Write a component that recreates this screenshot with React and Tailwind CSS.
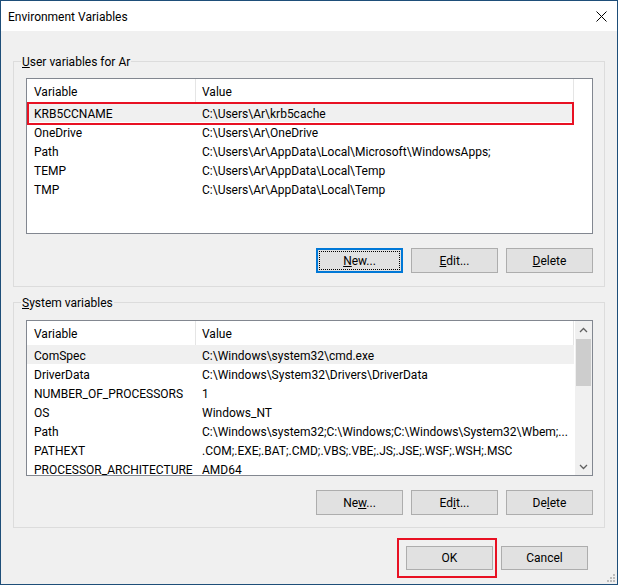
const userRows = [
  ['KRB5CCNAME', 'C:\\Users\\Ar\\krb5cache'],
  ['OneDrive', 'C:\\Users\\Ar\\OneDrive'],
  ['Path', 'C:\\Users\\Ar\\AppData\\Local\\Microsoft\\WindowsApps;'],
  ['TEMP', 'C:\\Users\\Ar\\AppData\\Local\\Temp'],
  ['TMP', 'C:\\Users\\Ar\\AppData\\Local\\Temp'],
];

const systemRows = [
  ['ComSpec', 'C:\\Windows\\system32\\cmd.exe'],
  ['DriverData', 'C:\\Windows\\System32\\Drivers\\DriverData'],
  ['NUMBER_OF_PROCESSORS', '1'],
  ['OS', 'Windows_NT'],
  ['Path', 'C:\\Windows\\system32;C:\\Windows;C:\\Windows\\System32\\Wbem;...'],
  ['PATHEXT', '.COM;.EXE;.BAT;.CMD;.VBS;.VBE;.JS;.JSE;.WSF;.WSH;.MSC'],
  ['PROCESSOR_ARCHITECTURE', 'AMD64'],
];

function Header() {
  return (
    <div className="flex h-[24px] shrink-0">
      <div className="w-[169px] pl-[7px] pt-[2px] flex items-center border-r border-[#e5e5e5]">Variable</div>
      <div className="w-[378px] pl-[6px] pt-[2px] flex items-center border-r border-[#e5e5e5]">Value</div>
    </div>
  );
}

function Row({ name, value, selected, marked }) {
  return (
    <div className={`relative flex h-[19px] shrink-0 w-[547px] ${selected ? 'bg-[#f0f0f0]' : ''}`}>
      <div className="w-[169px] pl-[7px] pt-[2px] flex items-center whitespace-nowrap overflow-hidden">{name}</div>
      <div className="w-[378px] pl-[6px] pt-[2px] flex items-center whitespace-nowrap overflow-hidden">{value}</div>
      {marked && (
        <div className="absolute left-0 top-[-1px] w-[547px] h-[23px] border-2 border-[#e81123]" />
      )}
    </div>
  );
}

function Btn({ children, primary }) {
  return (
    <div
      className={`relative w-[87px] h-[25px] flex items-center justify-center bg-[#e1e1e1] ${
        primary ? 'border-2 border-[#0078d7]' : 'border border-[#adadad]'
      }`}
    >
      {primary && <div className="absolute inset-[1px] border border-dotted border-black" />}
      <span>{children}</span>
    </div>
  );
}

function Chevron({ down }) {
  return (
    <svg width="9" height="6" viewBox="0 0 9 6">
      <path
        d={down ? 'M1 1 L4.5 4.5 L8 1' : 'M1 5 L4.5 1.5 L8 5'}
        fill="none"
        stroke="#606060"
        strokeWidth="1.3"
      />
    </svg>
  );
}

export default function App() {
  return (
    <div className="relative w-[618px] h-[585px] border border-[#1e4e79] bg-[#f0f0f0] flex flex-col text-[12px] leading-none text-black font-['Segoe_UI',Roboto,sans-serif]">
      {/* title bar */}
      <div className="h-[30px] bg-white flex items-center justify-between pl-[7px] pr-[10px] pt-[1px] shrink-0">
        <span>Environment Variables</span>
        <svg width="11" height="11" viewBox="0 0 11 11">
          <path d="M0.5 0.5 L10.5 10.5 M10.5 0.5 L0.5 10.5" stroke="#000" strokeWidth="1" />
        </svg>
      </div>

      <div className="flex-1 flex flex-col px-[12px]">
        {/* user variables */}
        <div className="relative mt-[30px] border border-[#dcdcdc] pt-[16px] pl-[12px] pr-[11px] pb-[13px]">
          <span className="absolute left-[7px] top-[-6px] px-[1px] bg-[#f0f0f0]">
            <u>U</u>ser variables for Ar
          </span>
          <div className="h-[156px] border border-[#828790] bg-white flex flex-col overflow-hidden">
            <Header />
            {userRows.map(([n, v], i) => (
              <Row key={n + i} name={n} value={v} selected={i === 0} marked={i === 0} />
            ))}
          </div>
          <div className="mt-[14px] flex justify-end gap-[8px]">
            <Btn primary><u>N</u>ew...</Btn>
            <Btn><u>E</u>dit...</Btn>
            <Btn><u>D</u>elete</Btn>
          </div>
        </div>

        {/* system variables */}
        <div className="relative mt-[15px] border border-[#dcdcdc] pt-[17px] pl-[12px] pr-[11px] pb-[12px]">
          <span className="absolute left-[7px] top-[-6px] px-[1px] bg-[#f0f0f0]">
            <u>S</u>ystem variables
          </span>
          <div className="h-[156px] border border-[#828790] bg-white flex overflow-hidden">
            <div className="flex-1 flex flex-col overflow-hidden">
              <Header />
              {systemRows.map(([n, v], i) => (
                <Row key={n + i} name={n} value={v} selected={i === 0} />
              ))}
            </div>
            <div className="w-[17px] bg-[#f0f0f0] flex flex-col items-center shrink-0">
              <div className="h-[17px] flex items-center justify-center">
                <Chevron />
              </div>
              <div className="mt-[1px] w-[15px] h-[47px] bg-[#cdcdcd]" />
              <div className="flex-1" />
              <div className="h-[17px] flex items-center justify-center">
                <Chevron down />
              </div>
            </div>
          </div>
          <div className="mt-[14px] flex justify-end gap-[8px]">
            <Btn>Ne<u>w</u>...</Btn>
            <Btn>Ed<u>i</u>t...</Btn>
            <Btn>De<u>l</u>ete</Btn>
          </div>
        </div>

        {/* dialog buttons */}
        <div className="mt-[18px] mr-[17px] flex justify-end gap-[8px]">
          <div className="relative">
            <div className="w-[87px] h-[24px] flex items-center justify-center bg-[#e1e1e1] border border-[#adadad]">OK</div>
            <div className="absolute left-[-9px] right-[-4px] top-[-8px] bottom-[-8px] border-2 border-[#e81123]" />
          </div>
          <div className="w-[87px] h-[24px] flex items-center justify-center bg-[#e1e1e1] border border-[#adadad]">Cancel</div>
        </div>
      </div>

      {/* resize grip */}
      <svg className="absolute right-[1px] bottom-[1px]" width="11" height="11" viewBox="0 0 11 11">
        {[
          [8, 2], [8, 5], [5, 5], [8, 8], [5, 8], [2, 8],
        ].map(([x, y]) => (
          <rect key={x + '-' + y} x={x} y={y} width="2" height="2" fill="#bcbcbc" />
        ))}
      </svg>
    </div>
  );
}
